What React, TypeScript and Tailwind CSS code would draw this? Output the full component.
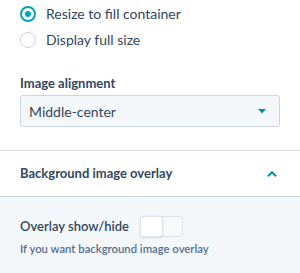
export default function App() {
  return (
    <div className="w-[300px] h-[273px] bg-white overflow-hidden text-[#33475b] font-['Lato',sans-serif]">
      <div className="px-5 pt-[4px]">
        <label className="flex items-center gap-[10px] h-[19px] mb-[7px]">
          <span className="w-[16px] h-[16px] rounded-full border-2 border-[#00a4bd] flex items-center justify-center">
            <span className="w-[6px] h-[6px] rounded-full bg-[#00a4bd]" />
          </span>
          <span className="text-[14px] leading-[19px]">Resize to fill container</span>
        </label>
        <label className="flex items-center gap-[10px] h-[19px]">
          <span className="w-[16px] h-[16px] rounded-full border border-[#cbd6e2] bg-white" />
          <span className="text-[14px] leading-[19px]">Display full size</span>
        </label>
        <div className="mt-[25px] text-[13px] font-bold leading-[18px]">Image alignment</div>
        <div className="mt-[3px] h-[32px] rounded-[3px] border border-[#cbd6e2] bg-[#f5f8fa] flex items-center justify-between pl-[8px] pr-[13px]">
          <span className="text-[14px]">Middle-center</span>
          <svg width="8" height="5" viewBox="0 0 8 5">
            <path d="M0 0h8L4 4.5z" fill="#0091ae" />
          </svg>
        </div>
      </div>
      <div className="mt-[23px] border-t border-[#dfe3eb]">
        <div className="h-[46px] flex items-center justify-between pl-5 pr-[23px] border-b border-[#cbd6e2]">
          <span className="text-[13px] font-bold">Background image overlay</span>
          <svg width="10" height="6" viewBox="0 0 10 6">
            <path d="M1 5.2L5 1.3l4 3.9" stroke="#0091ae" strokeWidth="2" fill="none" />
          </svg>
        </div>
        <div className="bg-[#f5f8fa] h-[80px] px-5 pt-[18px]">
          <div className="flex items-center gap-[11px]">
            <span className="text-[13px] font-semibold leading-[22px]">Overlay show/hide</span>
            <span className="w-[43px] h-[21px] rounded-[3px] border border-[#dfe3eb] bg-[#f7f9fb] flex">
              <span className="w-[23px] h-[21px] -mt-px -ml-px rounded-[3px] bg-white border border-[#dfe3eb] shadow-sm" />
            </span>
          </div>
          <div className="mt-[4px] text-[11.3px] font-semibold leading-[15px] text-[#516f90]">If you want background image overlay</div>
        </div>
      </div>
    </div>
  );
}
